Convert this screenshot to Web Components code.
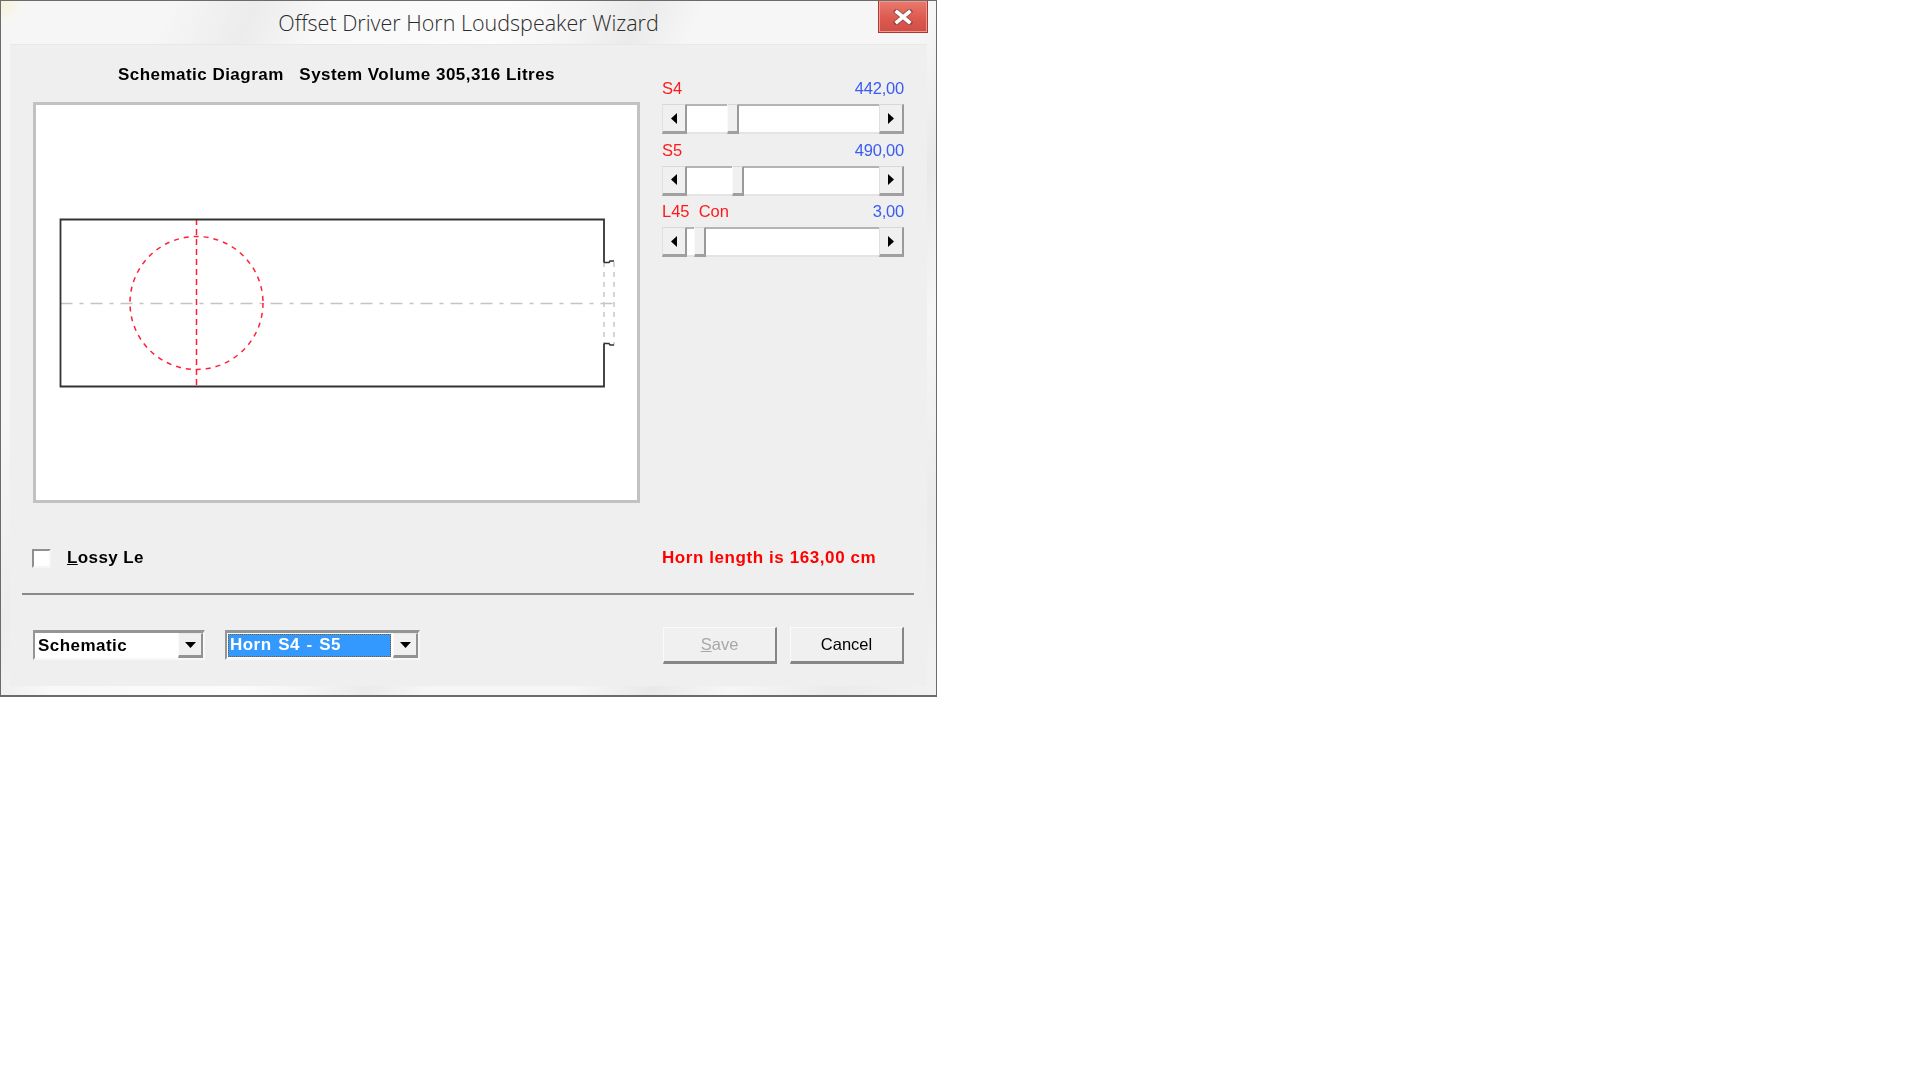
<!DOCTYPE html>
<html>
<head>
<meta charset="utf-8">
<title>Offset Driver Horn Loudspeaker Wizard</title>
<style>
  html, body { margin: 0; background: #fff; }
  body { width: 1920px; height: 1080px; overflow: hidden; font-family: 'Liberation Sans', sans-serif; }
</style>
</head>
<body>
<wizard-window heading="Offset Driver Horn Loudspeaker Wizard">
  <schematic-diagram slot="diagram"></schematic-diagram>
  <value-slider slot="sliders" label="S4" value="442,00" before="40" thumb="12"></value-slider>
  <value-slider slot="sliders" label="S5" value="490,00" before="45" thumb="12"></value-slider>
  <value-slider slot="sliders" label="L45&nbsp; Con" value="3,00" before="7" thumb="12"></value-slider>
  <check-box slot="check"><u>L</u>ossy Le</check-box>
  <combo-box slot="combos" style="width:172px">Schematic</combo-box>
  <combo-box slot="combos" style="width:195px" selected>Horn S4 - S5</combo-box>
  <push-button slot="buttons" disabled><u>S</u>ave</push-button>
  <push-button slot="buttons">Cancel</push-button>
</wizard-window>

<script>
function makeShadow(el, html) {
  el.attachShadow({ mode: 'open' }).innerHTML = html;
}

class WizardWindow extends HTMLElement {
  connectedCallback() {
    makeShadow(this, `
      <style>
        :host {
          display: flex;
          flex-direction: column;
          box-sizing: border-box;
          width: 937px;
          height: 697px;
          border: 1px solid #6b6b6b;
          border-bottom-width: 2px;
          background:
            radial-gradient(circle at 0 0, #f6f3d8 0, transparent 22px),
            linear-gradient(112deg, transparent 14%, #ececec 21%, #f8f8f8 27%, #fcfcfc 42%, #f4f4f4 48%, #ebebeb 53%, transparent 58%),
            linear-gradient(118deg, transparent 72%, #e9e9e9 78%, #f6f6f6 84%, #ebebeb 92%, #f2f2f2 100%),
            #f6f6f6;
        }
        .bar {
          display: flex;
          align-items: flex-start;
          height: 43px;
          padding-right: 8px;
          flex: none;
        }
        .title {
          flex: 1;
          padding-top: 7px;
          padding-left: 58px;
          text-align: center;
          font: 300 21.5px/30px 'Open Sans', sans-serif;
          color: #2b2b2b;
        }
        .close {
          width: 50px;
          height: 32px;
          box-sizing: border-box;
          border: 1px solid #a83a32;
          border-top: 0;
          background: linear-gradient(#ea7a6e, #dc5a50 55%, #cf4e46);
          box-shadow: inset 0 0 0 1px #ee9a90;
          display: flex;
          align-items: center;
          justify-content: center;
        }
        .client {
          flex: 1;
          margin: 0 9px 9px 9px;
          background: #efefef;
          border-top: 1px solid #e8e8e8;
          display: flex;
          flex-direction: column;
          padding: 0 23px 0 23px;
          color: #000;
          font-family: 'Liberation Sans', sans-serif;
          filter: blur(.35px);
        }
        .upper {
          display: grid;
          grid-template-columns: 607px 242px;
          column-gap: 22px;
        }
        .head {
          height: 57px;
          box-sizing: border-box;
          padding-top: 18.5px;
          text-align: center;
          font: bold 17px/22px 'Liberation Sans', sans-serif;
          letter-spacing: .47px;
          white-space: pre;
        }
        .sliders {
          display: flex;
          flex-direction: column;
          gap: 6.5px;
          padding-top: 34px;
        }
        .middle {
          display: grid;
          grid-template-columns: 607px 242px;
          column-gap: 22px;
          align-items: center;
          height: 90px;
          padding-top: 20px;
          box-sizing: border-box;
        }
        .length {
          color: #ff0000;
          font: bold 17px/22px 'Liberation Sans', sans-serif;
          letter-spacing: .58px;
        }
        hr {
          margin: 0 -10px 0 -11px;
          border: 0;
          height: 2px;
          background: #8a8a8a;
        }
        .lower {
          display: flex;
          justify-content: space-between;
          padding-top: 32px;
        }
        .combos { display: flex; gap: 20px; padding-top: 3px; }
        .buttons { display: flex; gap: 13px; }
      </style>
      <div class="bar">
        <div class="title">${this.getAttribute('heading')}</div>
        <div class="close">
          <svg width="20" height="16" viewBox="0 0 20 16">
            <path d="M3.5 2.5 L16.5 13.5 M16.5 2.5 L3.5 13.5" stroke="#5b3a38" stroke-width="5.4" stroke-linecap="square" opacity=".55"/>
            <path d="M4 3 L16 13 M16 3 L4 13" stroke="#fff" stroke-width="3.6" stroke-linecap="square"/>
          </svg>
        </div>
      </div>
      <div class="client">
        <div class="upper">
          <div>
            <div class="head">Schematic Diagram   System Volume 305,316 Litres</div>
            <slot name="diagram"></slot>
          </div>
          <div class="sliders"><slot name="sliders"></slot></div>
        </div>
        <div class="middle">
          <slot name="check"></slot>
          <div class="length">Horn length is 163,00 cm</div>
        </div>
        <hr>
        <div class="lower">
          <div class="combos"><slot name="combos"></slot></div>
          <div class="buttons"><slot name="buttons"></slot></div>
        </div>
      </div>
    `);
  }
}

class SchematicDiagram extends HTMLElement {
  connectedCallback() {
    makeShadow(this, `
      <style>
        :host {
          display: block;
          width: 607px;
          height: 401px;
          box-sizing: border-box;
          border: 3px solid #c2c2c2;
          background: #fff;
        }
        svg { display: block; }
      </style>
      <svg width="601" height="395" viewBox="36 105 601 395" fill="none">
        <path d="M60.5 303.5 H614" stroke="#c4c4c4" stroke-width="1.5" stroke-dasharray="12 7 4 7"/>
        <path d="M604 262 V344 M614 262 V345" stroke="#c8c8c8" stroke-width="1.5" stroke-dasharray="5 5"/>
        <circle cx="196.5" cy="303" r="66.5" stroke="#ff2038" stroke-width="1.5" stroke-dasharray="5 5"/>
        <path d="M196.5 219 V387" stroke="#ff2038" stroke-width="1.5" stroke-dasharray="6 4"/>
        <path d="M604 262.5 H609 L610 261 H614 M604 343.5 H609 L610 345 H614" stroke="#333" stroke-width="1.4"/>
        <path d="M604 262.5 V219.5 H60.5 V386.5 H604 V343.5" stroke="#333" stroke-width="1.8"/>
      </svg>
    `);
  }
}

class ValueSlider extends HTMLElement {
  connectedCallback() {
    const before = this.getAttribute('before');
    const thumb = this.getAttribute('thumb');
    makeShadow(this, `
      <style>
        :host {
          display: block;
          width: 242px;
          font: 16.5px/19px 'Liberation Sans', sans-serif;
        }
        .row { display: flex; justify-content: space-between; height: 25px; }
        .label { color: #ff1a1a; }
        .value { color: #3a5cf0; letter-spacing: -.2px; }
        .bar { display: flex; height: 30px; }
        .btn {
          flex: none;
          width: 25px;
          box-sizing: border-box;
          background: #f0f0f0;
          border-top: 1px solid #d8d8d8;
          border-left: 1px solid #e0e0e0;
          border-right: 2px solid #9a9a9a;
          border-bottom: 3px solid #a0a0a0;
          display: flex;
          align-items: center;
          justify-content: center;
        }
        .track {
          background: #fff;
          border-top: 2px solid #b4b4b4;
          border-bottom: 2px solid #e4e4e4;
          box-sizing: border-box;
        }
        .thumb {
          flex: none;
          box-sizing: border-box;
          background: #f0f0f0;
          border-top: 1px solid #d8d8d8;
          border-left: 1px solid #fafafa;
          border-right: 2px solid #9a9a9a;
          border-bottom: 3px solid #a0a0a0;
        }
      </style>
      <div class="row">
        <span class="label">${this.getAttribute('label')}</span>
        <span class="value">${this.getAttribute('value')}</span>
      </div>
      <div class="bar">
        <div class="btn"><svg width="6" height="11"><path d="M6 0 V11 L0 5.5 Z" fill="#000"/></svg></div>
        <div class="track" style="width:${before}px"></div>
        <div class="thumb" style="width:${thumb}px"></div>
        <div class="track" style="flex:1"></div>
        <div class="btn"><svg width="6" height="11"><path d="M0 0 V11 L6 5.5 Z" fill="#000"/></svg></div>
      </div>
    `);
  }
}

class CheckBox extends HTMLElement {
  connectedCallback() {
    makeShadow(this, `
      <style>
        :host {
          display: flex;
          align-items: center;
          gap: 16px;
          margin-left: -1px;
          font: bold 17px/22px 'Liberation Sans', sans-serif;
          letter-spacing: .4px;
        }
        .box {
          width: 19px;
          height: 19px;
          box-sizing: border-box;
          background: #fff;
          border-top: 2px solid #909090;
          border-left: 2px solid #909090;
          border-right: 2px solid #f6f6f6;
          border-bottom: 2px solid #f6f6f6;
        }
      </style>
      <div class="box"></div>
      <div><slot></slot></div>
    `);
  }
}

class ComboBox extends HTMLElement {
  connectedCallback() {
    makeShadow(this, `
      <style>
        :host {
          display: flex;
          height: 30px;
          box-sizing: border-box;
          background: #fff;
          border-top: 3px solid #959595;
          border-left: 2px solid #959595;
          border-right: 2px solid #f8f8f8;
          border-bottom: 2px solid #f8f8f8;
          font: bold 17px/22px 'Liberation Sans', sans-serif;
          letter-spacing: .45px;
        }
        .text {
          flex: 1;
          padding: 0 3px;
          line-height: 25px;
          white-space: nowrap;
        }
        :host([selected]) .text {
          margin: 1px 2px 1px 1px;
          padding: 0 2px;
          line-height: 21px;
          word-spacing: 1.5px;
          background: #3399ff;
          color: #fff;
          outline: 1px dotted #8a5a10;
          outline-offset: -1px;
        }
        .arrow {
          flex: none;
          width: 25px;
          box-sizing: border-box;
          background: #f0f0f0;
          border-right: 2px solid #929292;
          border-bottom: 3px solid #929292;
          border-top: 1px solid #e8e8e8;
          border-left: 1px solid #fafafa;
          display: flex;
          align-items: center;
          justify-content: center;
        }
      </style>
      <div class="text"><slot></slot></div>
      <div class="arrow"><svg width="11" height="6"><path d="M0 0 H11 L5.5 6 Z" fill="#000"/></svg></div>
    `);
  }
}

class PushButton extends HTMLElement {
  connectedCallback() {
    makeShadow(this, `
      <style>
        :host {
          display: flex;
          align-items: center;
          justify-content: center;
          width: 114px;
          height: 37px;
          box-sizing: border-box;
          padding-bottom: 2px;
          background: #f0f0f0;
          border-top: 1px solid #fafafa;
          border-left: 1px solid #fafafa;
          border-right: 2px solid #868686;
          border-bottom: 3px solid #868686;
          font: 16.5px/22px 'Liberation Sans', sans-serif;
          color: #000;
        }
        :host([disabled]) { color: #a8a8a8; }
      </style>
      <slot></slot>
    `);
  }
}

customElements.define('wizard-window', WizardWindow);
customElements.define('schematic-diagram', SchematicDiagram);
customElements.define('value-slider', ValueSlider);
customElements.define('check-box', CheckBox);
customElements.define('combo-box', ComboBox);
customElements.define('push-button', PushButton);
</script>
</body>
</html>
